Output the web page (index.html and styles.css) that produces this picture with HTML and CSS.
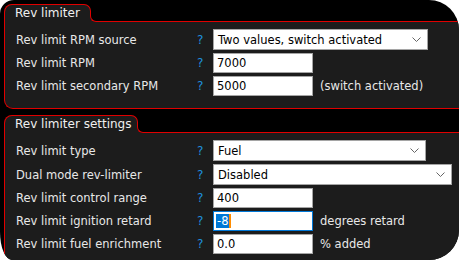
FILE: index.html
```html
<!DOCTYPE html>
<html>
<head>
<meta charset="utf-8">
<link rel="stylesheet" href="styles.css">
</head>
<body>
<div class="window">
  <section class="panel panel-first">
    <div class="tab">Rev limiter</div>
    <div class="body">
      <div class="row">
        <span class="label">Rev limit RPM source</span><span class="help">?</span>
        <div class="field select w215"><span>Two values, switch activated</span><svg class="chev" width="9" height="5" viewBox="0 0 9 5"><path d="M0.5 0.5 L4.5 4.5 L8.5 0.5" fill="none" stroke="#666" stroke-width="1"/></svg></div>
      </div>
      <div class="row">
        <span class="label">Rev limit RPM</span><span class="help">?</span>
        <div class="field text">7000</div>
      </div>
      <div class="row">
        <span class="label">Rev limit secondary RPM</span><span class="help">?</span>
        <div class="field text">5000</div><span class="suffix">(switch activated)</span>
      </div>
    </div>
  </section>
  <section class="panel panel-second">
    <div class="tab">Rev limiter settings</div>
    <div class="body">
      <div class="row">
        <span class="label">Rev limit type</span><span class="help">?</span>
        <div class="field select w213"><span>Fuel</span><svg class="chev" width="9" height="5" viewBox="0 0 9 5"><path d="M0.5 0.5 L4.5 4.5 L8.5 0.5" fill="none" stroke="#666" stroke-width="1"/></svg></div>
      </div>
      <div class="row">
        <span class="label">Dual mode rev-limiter</span><span class="help">?</span>
        <div class="field select w239"><span>Disabled</span><svg class="chev" width="9" height="5" viewBox="0 0 9 5"><path d="M0.5 0.5 L4.5 4.5 L8.5 0.5" fill="none" stroke="#666" stroke-width="1"/></svg></div>
      </div>
      <div class="row">
        <span class="label">Rev limit control range</span><span class="help">?</span>
        <div class="field text">400</div>
      </div>
      <div class="row">
        <span class="label">Rev limit ignition retard</span><span class="help">?</span>
        <div class="field text focused"><span class="sel">-8</span><span class="caret"></span></div><span class="suffix">degrees retard</span>
      </div>
      <div class="row">
        <span class="label">Rev limit fuel enrichment</span><span class="help">?</span>
        <div class="field text">0.0</div><span class="suffix">% added</span>
      </div>
    </div>
  </section>
</div>
</body>
</html>
```

FILE: styles.css
```css
html, body {
  margin: 0;
  padding: 0;
  background: #ffffff;
}
.window {
  width: 459px;
  height: 260px;
  background: #000000;
  border-radius: 14px 30px 30px 12px / 14px 30px 30px 28px;
  overflow: hidden;
  padding: 4px 0 0 4px;
  box-sizing: border-box;
  font-family: "DejaVu Sans", Verdana, sans-serif;
  font-size: 11.5px;
  color: #e8e8e8;
}
.panel {
  margin-right: -40px;
}
.panel-second {
  margin-top: 6px;
}
.tab {
  display: block;
  position: relative;
  height: 18px;
  line-height: 16px;
  padding: 0 0 0 10px;
  border: 1px solid #e00000;
  border-bottom: none;
  border-radius: 8px 7px 0 0;
  background: #1c1c1c;
  font-size: 12px;
  color: #f0f0f0;
  box-sizing: border-box;
  white-space: nowrap;
  z-index: 1;
  margin-bottom: -1px;
}
.tab::before,
.tab::after {
  content: "";
  position: absolute;
  left: 100%;
  bottom: 0;
  width: 8px;
  height: 7px;
  box-sizing: border-box;
}
.tab::before {
  background: #1c1c1c;
}
.tab::after {
  background: #000000;
  border-left: 1px solid #e00000;
  border-bottom: 1px solid #e00000;
  border-bottom-left-radius: 6px;
}
.panel-first .tab { width: 87px; }
.panel-second .tab { width: 134px; }
.body {
  background: #1c1c1c;
  border-top: 1px solid #e00000;
  border-left: 1px solid #e00000;
  border-bottom: 1px solid #e00000;
  border-radius: 0 0 0 9px;
  padding: 7px 0 12px 11px;
  display: flex;
  flex-direction: column;
  gap: 3px;
}
.panel-second .body {
  padding-bottom: 20px;
}
.row {
  display: flex;
  align-items: center;
  min-height: 20px;
}
.label {
  width: 181px;
  flex: none;
  white-space: nowrap;
}
.help {
  width: 16px;
  flex: none;
  color: #1e8fdc;
  font-size: 12px;
}
.field {
  box-sizing: border-box;
  height: 20px;
  background: #ffffff;
  border: 1px solid #a5a5a5;
  color: #000000;
  display: flex;
  align-items: center;
  flex: none;
  white-space: nowrap;
}
.select {
  padding: 0 6px 0 4px;
  justify-content: space-between;
  height: 21px;
}
.w215 { width: 215px; }
.w213 { width: 213px; }
.w239 { width: 239px; }
.text {
  width: 100px;
  padding-left: 3px;
}
.focused {
  border-color: #0078d7;
  padding-left: 2px;
}
.sel {
  background: #0078d7;
  color: #ffffff;
  line-height: 14px;
  padding: 0 1px;
}
.caret {
  width: 2px;
  height: 14px;
  background: #ff8c00;
}
.chev {
  display: block;
}
.suffix {
  margin-left: 7px;
  white-space: nowrap;
}
```
